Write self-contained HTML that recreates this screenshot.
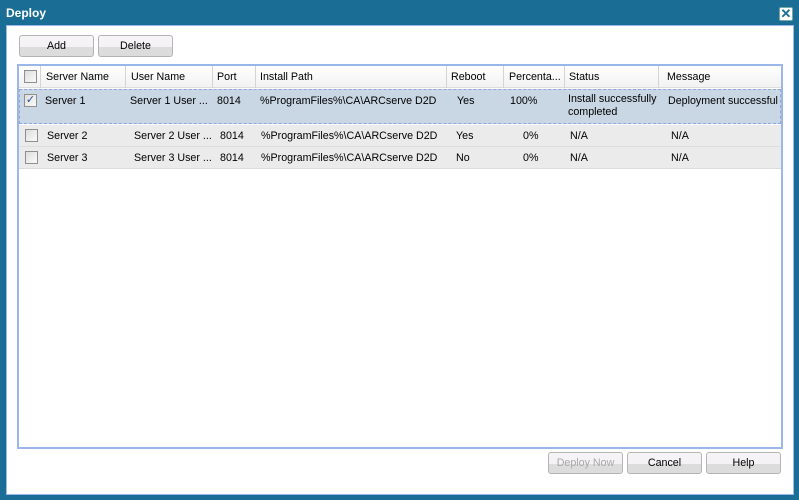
<!DOCTYPE html>
<html><head><style>
*{box-sizing:border-box;margin:0;padding:0}
body{width:799px;height:500px;background:#1a6d94;font-family:"Liberation Sans",sans-serif;font-size:10.7px;color:#000;position:relative;overflow:hidden}
.abs{position:absolute}
.title{left:6px;top:6px;color:#fff;font-weight:bold;font-size:12px}
.content{left:6px;top:25px;width:788px;height:470px;background:#fff;border:1px solid #9bb6e8}
.btn{position:absolute;height:22px;border:1px solid #b4b4b4;border-radius:3px;background:linear-gradient(#f6f4f6 0,#f4f2f4 55%,#dcdcdc 56%,#dcdcdc 100%);text-align:center;line-height:20px}
.grid{left:17px;top:64px;width:766px;height:385px;border:2px solid #9bb6e8;background:#fff}
.hdr{left:0;top:0;width:762px;height:22px;background:linear-gradient(#fff,#f2f2f2);border-bottom:1px solid #ddd}
.c{position:absolute;white-space:nowrap}
.sep{position:absolute;top:0;width:1px;height:22px;background:#d4d4d4}
.cb{position:absolute;width:13px;height:13px;border:1px solid #8f8f8f;background:linear-gradient(135deg,#ddd,#fafafa)}
.row{position:absolute;left:0;width:762px}
</style></head><body>
<div class="abs title">Deploy</div>
<div class="abs" style="left:779px;top:7px;width:14px;height:14px;background:#fff;border:1px solid #7aa;border-radius:2px;color:#1a6d94;font-size:13px;line-height:11px;text-align:center;font-weight:bold">✕</div>
<div class="abs content"></div>
<div class="btn" style="left:19px;top:35px;width:75px">Add</div>
<div class="btn" style="left:98px;top:35px;width:75px">Delete</div>
<div class="abs grid">
 <div class="abs hdr">
  <div class="cb" style="left:5px;top:4px"></div>
  <div class="sep" style="left:21px"></div>
  <div class="c" style="left:27px;top:5px">Server Name</div><div class="sep" style="left:106px"></div>
  <div class="c" style="left:112px;top:5px">User Name</div><div class="sep" style="left:193px"></div>
  <div class="c" style="left:198px;top:5px">Port</div><div class="sep" style="left:236px"></div>
  <div class="c" style="left:241px;top:5px">Install Path</div><div class="sep" style="left:427px"></div>
  <div class="c" style="left:432px;top:5px">Reboot</div><div class="sep" style="left:484px"></div>
  <div class="c" style="left:490px;top:5px">Percenta...</div><div class="sep" style="left:545px"></div>
  <div class="c" style="left:550px;top:5px">Status</div><div class="sep" style="left:639px"></div>
  <div class="c" style="left:648px;top:5px">Message</div>
 </div>
 <div class="row" style="top:23px;height:35px;background:#c9d6e4;border:1px dashed #8fa8d8">
  <div class="cb" style="left:4px;top:4px;color:#2a4fa0;font-size:11px;line-height:11px;text-align:center">✓</div>
  <div class="c" style="left:25px;top:5px">Server 1</div>
  <div class="c" style="left:110px;top:5px">Server 1 User ...</div>
  <div class="c" style="left:197px;top:5px">8014</div>
  <div class="c" style="left:240px;top:5px">%ProgramFiles%\CA\ARCserve D2D</div>
  <div class="c" style="left:437px;top:5px">Yes</div>
  <div class="c" style="left:490px;top:5px">100%</div>
  <div class="c" style="left:548px;top:3px;line-height:13px">Install successfully<br>completed</div>
  <div class="c" style="left:648px;top:5px">Deployment successful</div>
 </div>
 <div class="row" style="top:59px;height:22px;background:#ebebeb;border-bottom:1px solid #ddd">
  <div class="cb" style="left:6px;top:4px"></div>
  <div class="c" style="left:28px;top:5px">Server 2</div>
  <div class="c" style="left:115px;top:5px">Server 2 User ...</div>
  <div class="c" style="left:201px;top:5px">8014</div>
  <div class="c" style="left:242px;top:5px">%ProgramFiles%\CA\ARCserve D2D</div>
  <div class="c" style="left:437px;top:5px">Yes</div>
  <div class="c" style="left:504px;top:5px">0%</div>
  <div class="c" style="left:551px;top:5px">N/A</div>
  <div class="c" style="left:652px;top:5px">N/A</div>
 </div>
 <div class="row" style="top:81px;height:22px;background:#ebebeb;border-bottom:1px solid #ddd">
  <div class="cb" style="left:6px;top:4px"></div>
  <div class="c" style="left:28px;top:5px">Server 3</div>
  <div class="c" style="left:115px;top:5px">Server 3 User ...</div>
  <div class="c" style="left:201px;top:5px">8014</div>
  <div class="c" style="left:242px;top:5px">%ProgramFiles%\CA\ARCserve D2D</div>
  <div class="c" style="left:437px;top:5px">No</div>
  <div class="c" style="left:504px;top:5px">0%</div>
  <div class="c" style="left:551px;top:5px">N/A</div>
  <div class="c" style="left:652px;top:5px">N/A</div>
 </div>
</div>
<div class="btn" style="left:548px;top:452px;width:75px;color:#a8a8a8">Deploy Now</div>
<div class="btn" style="left:627px;top:452px;width:75px">Cancel</div>
<div class="btn" style="left:706px;top:452px;width:75px">Help</div>
</body></html>
